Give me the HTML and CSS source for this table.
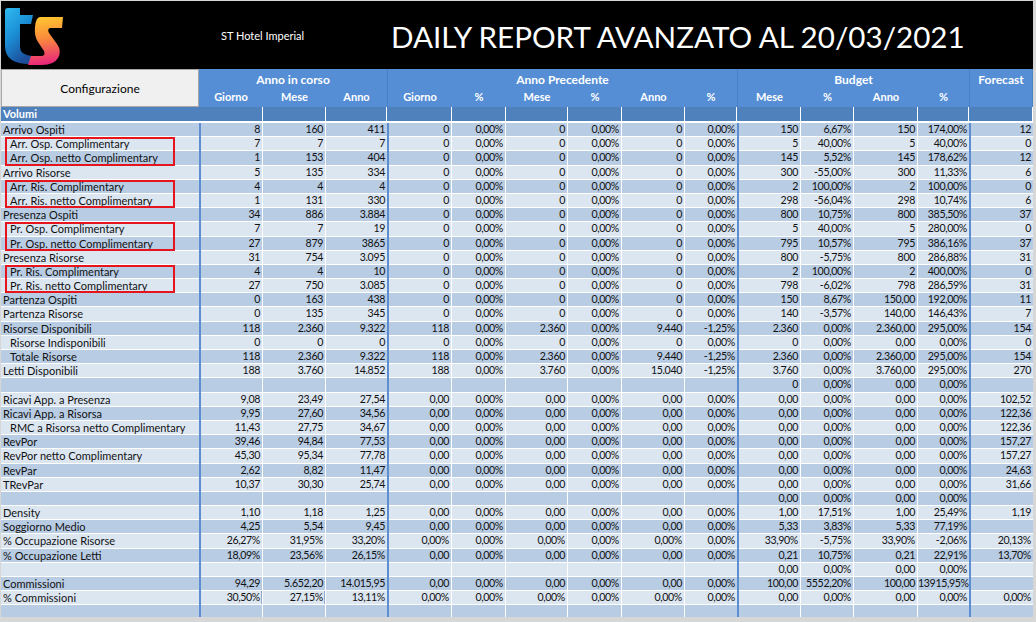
FILE: index.html
```html
<!DOCTYPE html>
<html lang="it">
<head>
<meta charset="utf-8">
<title>Daily Report Avanzato</title>
<link rel="stylesheet" href="styles.css">
</head>
<body>
<div class="sheet">
  <header class="topbar">
    <div class="logo-wrap">
      <svg class="logo" viewBox="3 5 62 62" width="62" height="62">
        <defs>
          <linearGradient id="gt" x1="0" y1="0" x2="0.5" y2="1">
            <stop offset="0" stop-color="#2fbaf0"/>
            <stop offset="0.5" stop-color="#1b8fd6"/>
            <stop offset="1" stop-color="#1d4f9c"/>
          </linearGradient>
          <linearGradient id="gs" x1="0.4" y1="0" x2="0.5" y2="1">
            <stop offset="0" stop-color="#ffc62f"/>
            <stop offset="0.45" stop-color="#fa8a3c"/>
            <stop offset="1" stop-color="#e8237f"/>
          </linearGradient>
        </defs>
        <path fill="url(#gt)" d="M8 8 L20 8 L20 15 L33 15 L31 24 L20 24 L20 47 Q20 55 32 56 L30 64 Q5 64 5 46 L5 11 Q5 8 8 8 Z"/>
        <path fill="url(#gs)" d="M40 17 L63 17 L62 28 L50 28 Q47 29 49 33 L57 44 Q62 51 58 58 Q54 65 42 65 L28 65 L31 56 L41 56 Q46 56 44 51 L38 42 Q34 36 35 27 Q36 17 40 17 Z"/>
      </svg>
    </div>
    <div class="hotel">ST Hotel Imperial</div>
    <h1 class="title">DAILY REPORT AVANZATO AL 20/03/2021</h1>
  </header>

  <div class="cols head">
    <div class="config">Configurazione</div>
    <div class="grp g-ac">Anno in corso</div>
    <div class="grp g-ap">Anno Precedente</div>
    <div class="grp g-b">Budget</div>
    <div class="grp g-f">Forecast</div>
    <div class="sub">Giorno</div>
    <div class="sub">Mese</div>
    <div class="sub">Anno</div>
    <div class="sub gs">Giorno</div>
    <div class="sub">%</div>
    <div class="sub">Mese</div>
    <div class="sub">%</div>
    <div class="sub">Anno</div>
    <div class="sub">%</div>
    <div class="sub gs">Mese</div>
    <div class="sub">%</div>
    <div class="sub">Anno</div>
    <div class="sub">%</div>
  </div>

  <div class="cols sec">
    <span class="sec-label">Volumi</span><span></span><span></span><span></span><span></span><span></span><span></span><span></span><span></span><span></span><span></span><span></span><span></span><span></span>
  </div>

  <div class="rows">
    <div class="cols r d"><span>Arrivo Ospiti</span><span>8</span><span>160</span><span>411</span><span>0</span><span>0,00%</span><span>0</span><span>0,00%</span><span>0</span><span>0,00%</span><span>150</span><span>6,67%</span><span>150</span><span>174,00%</span><span>12</span></div>
    <div class="cols r l"><span class="in boxed">Arr. Osp. Complimentary<i class="box"></i></span><span>7</span><span>7</span><span>7</span><span>0</span><span>0,00%</span><span>0</span><span>0,00%</span><span>0</span><span>0,00%</span><span>5</span><span>40,00%</span><span>5</span><span>40,00%</span><span>0</span></div>
    <div class="cols r d"><span class="in">Arr. Osp. netto Complimentary</span><span>1</span><span>153</span><span>404</span><span>0</span><span>0,00%</span><span>0</span><span>0,00%</span><span>0</span><span>0,00%</span><span>145</span><span>5,52%</span><span>145</span><span>178,62%</span><span>12</span></div>
    <div class="cols r l"><span>Arrivo Risorse</span><span>5</span><span>135</span><span>334</span><span>0</span><span>0,00%</span><span>0</span><span>0,00%</span><span>0</span><span>0,00%</span><span>300</span><span>-55,00%</span><span>300</span><span>11,33%</span><span>6</span></div>
    <div class="cols r d"><span class="in boxed">Arr. Ris. Complimentary<i class="box"></i></span><span>4</span><span>4</span><span>4</span><span>0</span><span>0,00%</span><span>0</span><span>0,00%</span><span>0</span><span>0,00%</span><span>2</span><span>100,00%</span><span>2</span><span>100,00%</span><span>0</span></div>
    <div class="cols r l"><span class="in">Arr. Ris. netto Complimentary</span><span>1</span><span>131</span><span>330</span><span>0</span><span>0,00%</span><span>0</span><span>0,00%</span><span>0</span><span>0,00%</span><span>298</span><span>-56,04%</span><span>298</span><span>10,74%</span><span>6</span></div>
    <div class="cols r d"><span>Presenza Ospiti</span><span>34</span><span>886</span><span>3.884</span><span>0</span><span>0,00%</span><span>0</span><span>0,00%</span><span>0</span><span>0,00%</span><span>800</span><span>10,75%</span><span>800</span><span>385,50%</span><span>37</span></div>
    <div class="cols r l"><span class="in boxed">Pr. Osp. Complimentary<i class="box"></i></span><span>7</span><span>7</span><span>19</span><span>0</span><span>0,00%</span><span>0</span><span>0,00%</span><span>0</span><span>0,00%</span><span>5</span><span>40,00%</span><span>5</span><span>280,00%</span><span>0</span></div>
    <div class="cols r d"><span class="in">Pr. Osp. netto Complimentary</span><span>27</span><span>879</span><span>3865</span><span>0</span><span>0,00%</span><span>0</span><span>0,00%</span><span>0</span><span>0,00%</span><span>795</span><span>10,57%</span><span>795</span><span>386,16%</span><span>37</span></div>
    <div class="cols r l"><span>Presenza Risorse</span><span>31</span><span>754</span><span>3.095</span><span>0</span><span>0,00%</span><span>0</span><span>0,00%</span><span>0</span><span>0,00%</span><span>800</span><span>-5,75%</span><span>800</span><span>286,88%</span><span>31</span></div>
    <div class="cols r d"><span class="in boxed">Pr. Ris. Complimentary<i class="box"></i></span><span>4</span><span>4</span><span>10</span><span>0</span><span>0,00%</span><span>0</span><span>0,00%</span><span>0</span><span>0,00%</span><span>2</span><span>100,00%</span><span>2</span><span>400,00%</span><span>0</span></div>
    <div class="cols r l"><span class="in">Pr. Ris. netto Complimentary</span><span>27</span><span>750</span><span>3.085</span><span>0</span><span>0,00%</span><span>0</span><span>0,00%</span><span>0</span><span>0,00%</span><span>798</span><span>-6,02%</span><span>798</span><span>286,59%</span><span>31</span></div>
    <div class="cols r d"><span>Partenza Ospiti</span><span>0</span><span>163</span><span>438</span><span>0</span><span>0,00%</span><span>0</span><span>0,00%</span><span>0</span><span>0,00%</span><span>150</span><span>8,67%</span><span>150,00</span><span>192,00%</span><span>11</span></div>
    <div class="cols r l"><span>Partenza Risorse</span><span>0</span><span>135</span><span>345</span><span>0</span><span>0,00%</span><span>0</span><span>0,00%</span><span>0</span><span>0,00%</span><span>140</span><span>-3,57%</span><span>140,00</span><span>146,43%</span><span>7</span></div>
    <div class="cols r d"><span>Risorse Disponibili</span><span>118</span><span>2.360</span><span>9.322</span><span>118</span><span>0,00%</span><span>2.360</span><span>0,00%</span><span>9.440</span><span>-1,25%</span><span>2.360</span><span>0,00%</span><span>2.360,00</span><span>295,00%</span><span>154</span></div>
    <div class="cols r l"><span class="in">Risorse Indisponibili</span><span>0</span><span>0</span><span>0</span><span>0</span><span>0,00%</span><span>0</span><span>0,00%</span><span>0</span><span>0,00%</span><span>0</span><span>0,00%</span><span>0,00</span><span>0,00%</span><span>0</span></div>
    <div class="cols r d"><span class="in">Totale Risorse</span><span>118</span><span>2.360</span><span>9.322</span><span>118</span><span>0,00%</span><span>2.360</span><span>0,00%</span><span>9.440</span><span>-1,25%</span><span>2.360</span><span>0,00%</span><span>2.360,00</span><span>295,00%</span><span>154</span></div>
    <div class="cols r l"><span>Letti Disponibili</span><span>188</span><span>3.760</span><span>14.852</span><span>188</span><span>0,00%</span><span>3.760</span><span>0,00%</span><span>15.040</span><span>-1,25%</span><span>3.760</span><span>0,00%</span><span>3.760,00</span><span>295,00%</span><span>270</span></div>
    <div class="cols r d"><span></span><span></span><span></span><span></span><span></span><span></span><span></span><span></span><span></span><span></span><span>0</span><span>0,00%</span><span>0,00</span><span>0,00%</span><span></span></div>
    <div class="cols r l"><span>Ricavi App. a Presenza</span><span>9,08</span><span>23,49</span><span>27,54</span><span>0,00</span><span>0,00%</span><span>0,00</span><span>0,00%</span><span>0,00</span><span>0,00%</span><span>0,00</span><span>0,00%</span><span>0,00</span><span>0,00%</span><span>102,52</span></div>
    <div class="cols r d"><span>Ricavi App. a Risorsa</span><span>9,95</span><span>27,60</span><span>34,56</span><span>0,00</span><span>0,00%</span><span>0,00</span><span>0,00%</span><span>0,00</span><span>0,00%</span><span>0,00</span><span>0,00%</span><span>0,00</span><span>0,00%</span><span>122,36</span></div>
    <div class="cols r l"><span class="in">RMC a Risorsa netto Complimentary</span><span>11,43</span><span>27,75</span><span>34,67</span><span>0,00</span><span>0,00%</span><span>0,00</span><span>0,00%</span><span>0,00</span><span>0,00%</span><span>0,00</span><span>0,00%</span><span>0,00</span><span>0,00%</span><span>122,36</span></div>
    <div class="cols r d"><span>RevPor</span><span>39,46</span><span>94,84</span><span>77,53</span><span>0,00</span><span>0,00%</span><span>0,00</span><span>0,00%</span><span>0,00</span><span>0,00%</span><span>0,00</span><span>0,00%</span><span>0,00</span><span>0,00%</span><span>157,27</span></div>
    <div class="cols r l"><span>RevPor netto Complimentary</span><span>45,30</span><span>95,34</span><span>77,78</span><span>0,00</span><span>0,00%</span><span>0,00</span><span>0,00%</span><span>0,00</span><span>0,00%</span><span>0,00</span><span>0,00%</span><span>0,00</span><span>0,00%</span><span>157,27</span></div>
    <div class="cols r d"><span>RevPar</span><span>2,62</span><span>8,82</span><span>11,47</span><span>0,00</span><span>0,00%</span><span>0,00</span><span>0,00%</span><span>0,00</span><span>0,00%</span><span>0,00</span><span>0,00%</span><span>0,00</span><span>0,00%</span><span>24,63</span></div>
    <div class="cols r l"><span>TRevPar</span><span>10,37</span><span>30,30</span><span>25,74</span><span>0,00</span><span>0,00%</span><span>0,00</span><span>0,00%</span><span>0,00</span><span>0,00%</span><span>0,00</span><span>0,00%</span><span>0,00</span><span>0,00%</span><span>31,66</span></div>
    <div class="cols r d"><span></span><span></span><span></span><span></span><span></span><span></span><span></span><span></span><span></span><span></span><span>0,00</span><span>0,00%</span><span>0,00</span><span>0,00%</span><span></span></div>
    <div class="cols r l"><span>Density</span><span>1,10</span><span>1,18</span><span>1,25</span><span>0,00</span><span>0,00%</span><span>0,00</span><span>0,00%</span><span>0,00</span><span>0,00%</span><span>1,00</span><span>17,51%</span><span>1,00</span><span>25,49%</span><span>1,19</span></div>
    <div class="cols r d"><span>Soggiorno Medio</span><span>4,25</span><span>5,54</span><span>9,45</span><span>0,00</span><span>0,00%</span><span>0,00</span><span>0,00%</span><span>0,00</span><span>0,00%</span><span>5,33</span><span>3,83%</span><span>5,33</span><span>77,19%</span><span></span></div>
    <div class="cols r l"><span>% Occupazione Risorse</span><span>26,27%</span><span>31,95%</span><span>33,20%</span><span>0,00%</span><span>0,00%</span><span>0,00%</span><span>0,00%</span><span>0,00%</span><span>0,00%</span><span>33,90%</span><span>-5,75%</span><span>33,90%</span><span>-2,06%</span><span>20,13%</span></div>
    <div class="cols r d"><span>% Occupazione Letti</span><span>18,09%</span><span>23,56%</span><span>26,15%</span><span>0,00</span><span>0,00%</span><span>0,00</span><span>0,00%</span><span>0,00</span><span>0,00%</span><span>0,21</span><span>10,75%</span><span>0,21</span><span>22,91%</span><span>13,70%</span></div>
    <div class="cols r l"><span></span><span></span><span></span><span></span><span></span><span></span><span></span><span></span><span></span><span></span><span>0,00</span><span>0,00%</span><span>0,00</span><span>0,00%</span><span></span></div>
    <div class="cols r d"><span>Commissioni</span><span>94,29</span><span>5.652,20</span><span>14.015,95</span><span>0,00</span><span>0,00%</span><span>0,00</span><span>0,00%</span><span>0,00</span><span>0,00%</span><span>100,00</span><span>5552,20%</span><span>100,00</span><span>13915,95%</span><span></span></div>
    <div class="cols r l"><span>% Commissioni</span><span class="dbl">30,50%</span><span class="dbl">27,15%</span><span>13,11%</span><span>0,00%</span><span>0,00%</span><span>0,00%</span><span>0,00%</span><span>0,00%</span><span>0,00%</span><span>0,00</span><span>0,00%</span><span>0,00</span><span>0,00%</span><span>0,00%</span></div>
    <div class="cols r d"><span></span><span></span><span></span><span></span><span></span><span></span><span></span><span></span><span></span><span></span><span></span><span></span><span></span><span></span><span></span></div>
  </div>
</div>
</body>
</html>
```

FILE: styles.css
```css
* { box-sizing: border-box; margin: 0; padding: 0; }

html, body { width: 1036px; height: 622px; overflow: hidden; }

body {
  background: #d7d7d7;
  padding: 1px 3px 5px 1px;
  font-family: Lato, "Liberation Sans", sans-serif;
  color: #111;
}

.sheet {
  width: 1032px;
  height: 616px;
  overflow: hidden;
  background: #fff;
  display: flex;
  flex-direction: column;
}

/* ---------- top black bar ---------- */
.topbar {
  flex: 0 0 68px;
  background: #000;
  display: flex;
  align-items: center;
  color: #fff;
}

.logo-wrap {
  width: 220px;
  align-self: flex-start;
  padding: 4px 0 0 2px;
}

.logo { display: block; }

.hotel {
  width: 172px;
  font-size: 11px;
}

.title {
  font-size: 29.6px;
  font-weight: 400;
  white-space: nowrap;
  padding-top: 3px;
  margin-left: -2px;
}

/* ---------- shared column grid ---------- */
.cols {
  display: grid;
  grid-template-columns: 198px 64px 63px 61px 65px 54px 62px 54px 63px 52px 64px 53px 64px 51px 64px;
}

/* ---------- header ---------- */
.head {
  flex: 0 0 38px;
  grid-template-rows: 19px 19px;
  background: #558ed5;
  color: #fff;
  font-weight: 700;
}

.config {
  grid-row: 1 / 3;
  grid-column: 1;
  background: #f0f0f0;
  border: 1px solid #a8a8a8;
  color: #000;
  font-weight: 400;
  font-size: 12px;
  display: flex;
  align-items: center;
  justify-content: center;
}

.grp {
  grid-row: 1;
  font-size: 12px;
  text-align: center;
  line-height: 21px;
}

.g-ac { grid-column: 2 / 5; }
.g-ap { grid-column: 5 / 11; border-left: 1px solid #4b7fc4; }
.g-b  { grid-column: 11 / 15; border-left: 1px solid #4b7fc4; }
.g-f  { grid-column: 15; grid-row: 1 / 3; border-left: 1px solid #4b7fc4; border-right: 1px solid #4b7fc4; }

.sub {
  grid-row: 2;
  font-size: 11px;
  text-align: center;
  line-height: 18px;
}

.sub.gs { border-left: 1px solid #4b7fc4; }

/* ---------- section row ---------- */
.sec {
  flex: 0 0 16px;
}

.sec > span {
  background: #4f81bd;
  box-shadow: inset 0 -2px 0 #fff;
  border-right: 1px solid #fff;
}

.sec-label {
  grid-column: 1 / 3;
  color: #fff;
  font-size: 11px;
  font-weight: 700;
  line-height: 14px;
  padding-left: 2px;
}

/* ---------- data rows ---------- */
.rows {
  display: flex;
  flex-direction: column;
}

.r {
  height: 14.2px;
  flex: 0 0 14.2px;
  font-size: 10.6px;
  letter-spacing: -0.35px;
}

.r > span {
  box-shadow: inset 0 -1px 0 #fff;
  border-right: 1px solid #fff;
  text-align: right;
  padding-right: 2px;
  line-height: 13.4px;
  white-space: nowrap;
  overflow: visible;
}

.r.d > span { background: #b8cce4; }
.r.l > span { background: #dce6f1; }

.r > span:first-child {
  font-size: 11px;
  letter-spacing: 0;
  text-align: left;
  padding-left: 2px;
  border-right: 0;
}

.r > span:nth-child(2),
.r > span:nth-child(5),
.r > span:nth-child(11),
.r > span:nth-child(15) {
  border-left: 2px solid #5d8ed2;
}

.r > span:nth-child(4),
.r > span:nth-child(10),
.r > span:nth-child(14),
.r > span:nth-child(15) {
  border-right: 0;
}

.r > span.in { padding-left: 9px; }

.r > span.dbl { box-shadow: inset 0 -1px 0 #fff, inset -1px 0 0 #8faad0; }

.boxed { position: relative; }

.box {
  position: absolute;
  left: 4px;
  top: 0;
  width: 170px;
  height: 28.6px;
  border: 2px solid #e5141d;
}
```
